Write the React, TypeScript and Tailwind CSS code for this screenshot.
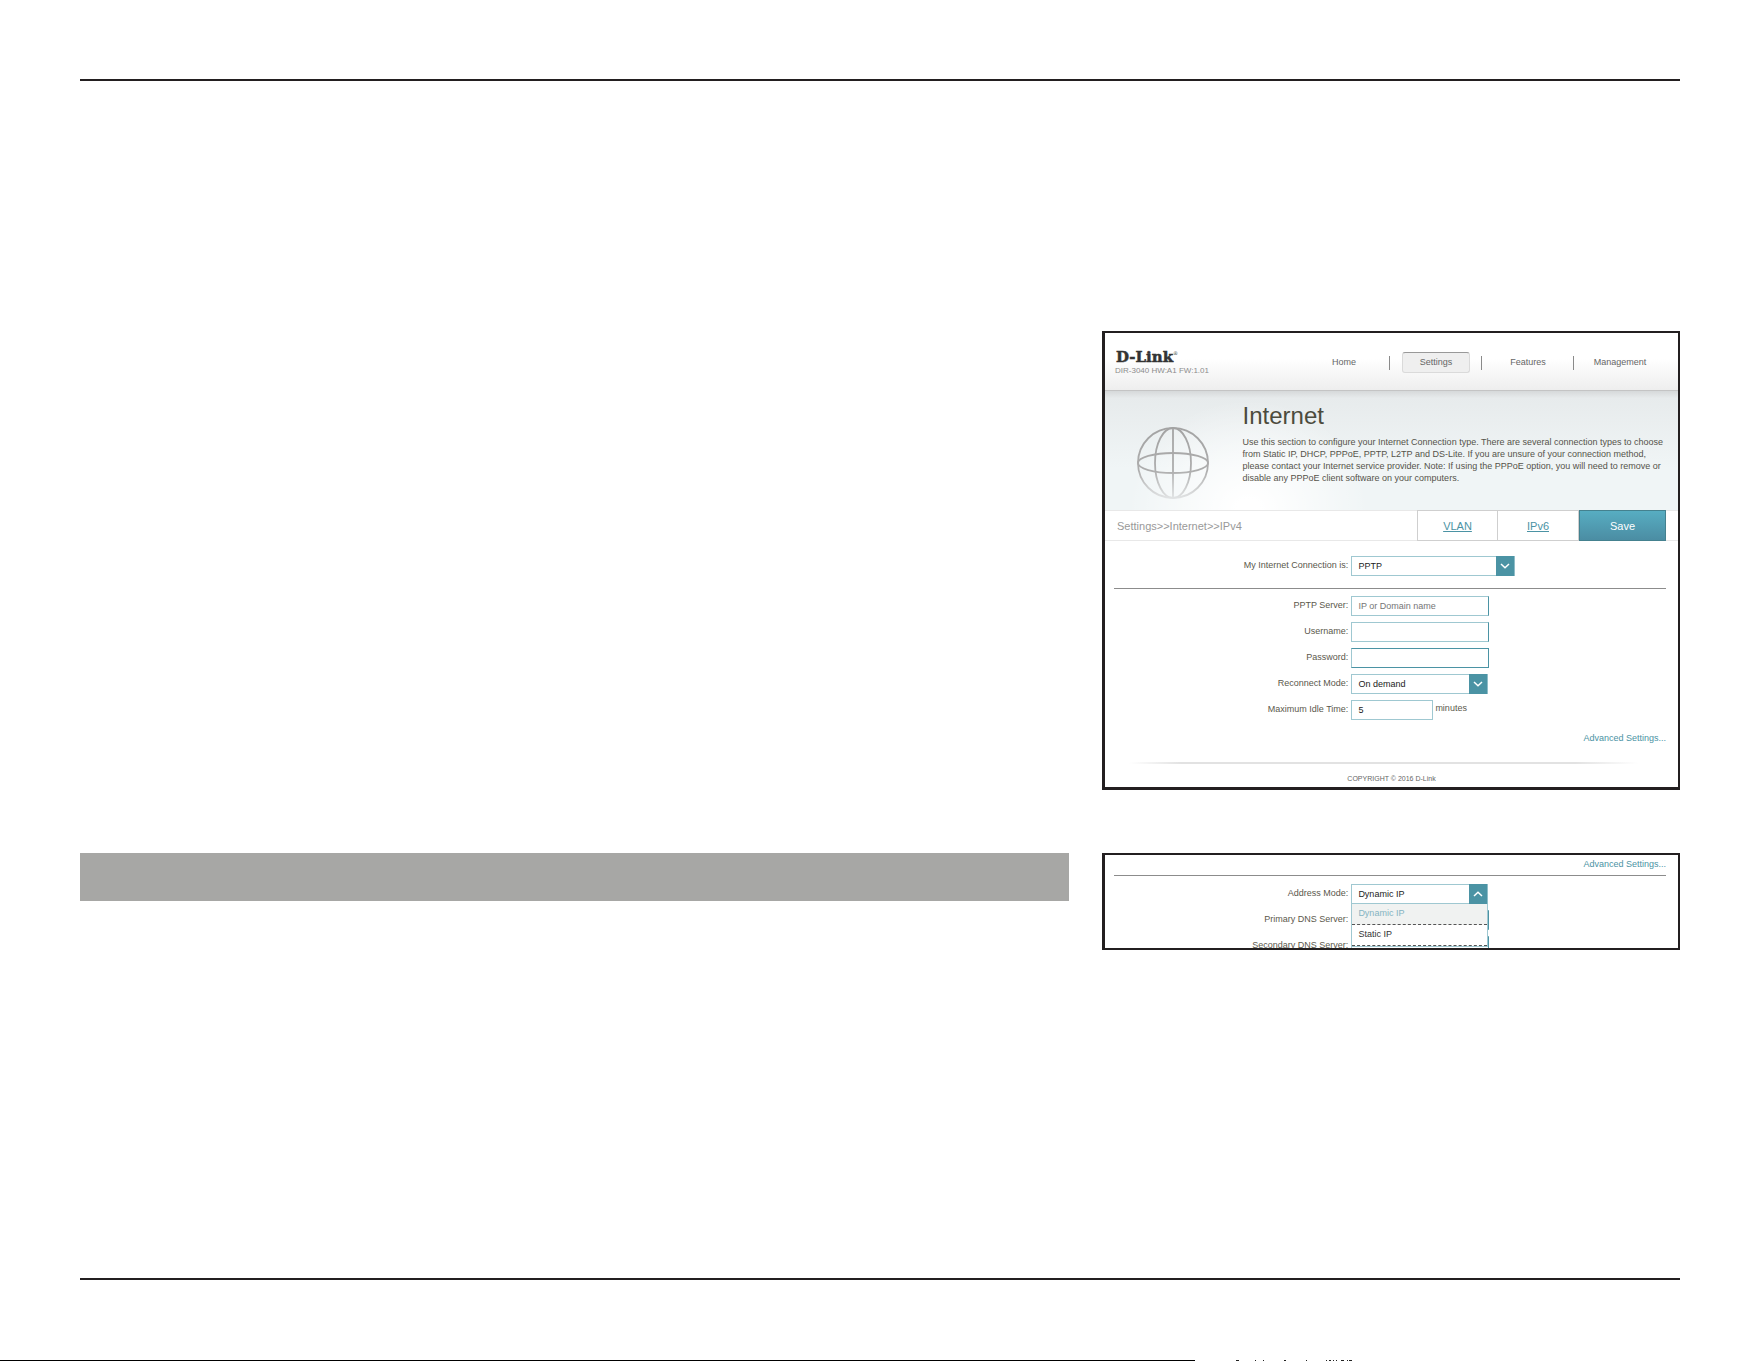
import React from "react";

const nav = ["Home", "Settings", "Features", "Management"];

function Globe() {
  return (
    <svg viewBox="0 0 72 72" className="h-[72px] w-[72px]" fill="none" aria-hidden="true">
      <defs>
        <linearGradient id="globe-stroke" gradientUnits="userSpaceOnUse" x1="0" y1="0" x2="0" y2="72">
          <stop offset="0" stopColor="#a3a3a3" />
          <stop offset="0.6" stopColor="#adadad" />
          <stop offset="1" stopColor="#e2e4e5" />
        </linearGradient>
      </defs>
      <g stroke="url(#globe-stroke)" strokeWidth="1.8">
        <circle cx="36" cy="36" r="35" />
        <ellipse cx="36" cy="36" rx="18" ry="35" />
        <ellipse cx="36" cy="36" rx="35" ry="10" />
        <path d="M36 1 L36.01 71" />
      </g>
    </svg>
  );
}

function Arrow({ up = false }: { up?: boolean }) {
  return (
    <span className="pointer-events-none absolute inset-y-0 right-0 flex w-[19px] items-center justify-center border-r border-[#8fbdc8] bg-[#4b93a4]">
      <svg viewBox="0 0 10 6" className="h-[6px] w-[10px]" fill="none" stroke="#fff" strokeWidth="1.5" aria-hidden="true">
        <path d={up ? "M1 5 L5 1.2 L9 5" : "M1 1 L5 4.8 L9 1"} />
      </svg>
    </span>
  );
}

function Select({ id, value, width, up }: { id: string; value: string; width: string; up?: boolean }) {
  return (
    <div className={`relative ${width}`}>
      <select
        id={id}
        defaultValue={value}
        className="block h-5 w-full appearance-none border border-[#9fc8d1] bg-white pl-[6px] text-[9px] leading-[18px] text-[#222] outline-none"
      >
        <option>{value}</option>
      </select>
      <Arrow up={up} />
    </div>
  );
}

function Row({ id, label, children }: { id: string; label: string; children: React.ReactNode }) {
  return (
    <div className="grid grid-cols-[43%_1fr]">
      <label htmlFor={id} className="pr-[3px] text-right text-[9px] leading-[19px] text-[#5b584c]">
        {label}
      </label>
      <div className="flex">{children}</div>
    </div>
  );
}

const inputBase =
  "block h-5 border bg-white pl-[6px] text-[9px] leading-[18px] text-[#222] outline-none placeholder:text-[#757575]";

function RouterPage() {
  return (
    <section className="border-2 border-b-[3px] border-l-[3px] border-[#231f20] bg-white">
      <header className="flex h-[57px] items-start justify-between bg-gradient-to-b from-white from-45% to-[#eeeeee] pr-3 pl-[10px]">
        <div className="pt-[15px]">
          <div className="flex pl-px font-['DejaVu_Serif'] text-[15px] leading-[18px] font-bold text-[#333] [-webkit-text-stroke:0.5px_#333]">
            D-Link
            <span className="text-[5px] leading-[10px] font-normal [-webkit-text-stroke:0px]">®</span>
          </div>
          <div className="text-[8px] leading-[10px] whitespace-nowrap text-[#8c8c8c]">DIR-3040 HW:A1 FW:1.01</div>
        </div>
        <nav className="flex pt-[19px]">
          {nav.map((item) => (
            <div key={item} className="flex w-[92px] items-center">
              <a
                href="#"
                className={
                  item === "Settings"
                    ? "ml-3 block h-[21px] w-[68px] rounded-[3px] border border-[#dadada] border-t-[#999] bg-[#efefef] text-center text-[9px] leading-[19px] text-[#666]"
                    : "ml-3 block h-[21px] w-[68px] text-center text-[9px] leading-[21px] text-[#666]"
                }
              >
                {item}
              </a>
              {item !== "Management" && <span className="ml-[11px] h-[14px] w-px bg-[#8a8a8a]" />}
            </div>
          ))}
        </nav>
      </header>

      <div className="grid h-[120px] grid-cols-[24%_1fr] border-t border-[#c4c4c4] bg-[radial-gradient(ellipse_120px_110px_at_25%_100%,#ffffff_10%,transparent),linear-gradient(to_bottom,#d6d9da,#e7ebec_6%,#f0f5f6_65%)]">
        <div className="flex justify-center pt-9 pr-px">
          <Globe />
        </div>
        <div className="pt-[10px] pr-3">
          <h1 className="text-[24px] leading-[30px] text-[#4c4b3d]">Internet</h1>
          <p className="mt-[5px] text-[9px] leading-[12px] text-[#55534a]">
            Use this section to configure your Internet Connection type. There are several connection types to choose
            from Static IP, DHCP, PPPoE, PPTP, L2TP and DS-Lite. If you are unsure of your connection method, please
            contact your Internet service provider. Note: If using the PPPoE option, you will need to remove or disable
            any PPPoE client software on your computers.
          </p>
        </div>
      </div>

      <div className="flex h-[31px] items-stretch border-y border-[#e8e8e8] pr-3 pl-3 text-[11px]">
        <div className="flex-1 leading-[30px] text-[#999]">Settings&gt;&gt;Internet&gt;&gt;IPv4</div>
        <a href="#" className="-my-px w-[81px] border border-[#cfcfcf] text-center leading-[31px] text-[#4b93a4] underline">
          VLAN
        </a>
        <a href="#" className="-my-px w-[81px] border border-l-0 border-[#cfcfcf] text-center leading-[31px] text-[#4b93a4] underline">
          IPv6
        </a>
        <button
          type="button"
          className="-my-px w-[87px] border border-[#44818f] bg-gradient-to-b from-[#57adc2] to-[#4b8da3] text-center leading-[31px] text-white"
        >
          Save
        </button>
      </div>

      <form className="pt-[15px]">
        <Row id="connection" label="My Internet Connection is:">
          <Select id="connection" value="PPTP" width="w-[164px]" />
        </Row>
        <hr className="mt-3 mr-3 ml-[9px] border-t border-[#8c8c8c]" />
        <div className="mt-[7px] flex flex-col gap-[6px]">
          <Row id="server" label="PPTP Server:">
            <input id="server" placeholder="IP or Domain name" className={`${inputBase} w-[138px] border-[#9fc8d1] border-r-[#4b93a4]`} />
          </Row>
          <Row id="username" label="Username:">
            <input id="username" className={`${inputBase} w-[138px] border-[#9fc8d1] border-r-[#4b93a4]`} />
          </Row>
          <Row id="password" label="Password:">
            <input id="password" type="password" className={`${inputBase} w-[138px] border-[#4b93a4] border-l-[#9fc8d1]`} />
          </Row>
          <Row id="reconnect" label="Reconnect Mode:">
            <Select id="reconnect" value="On demand" width="w-[137px]" />
          </Row>
          <Row id="idle" label="Maximum Idle Time:">
            <input id="idle" defaultValue="5" className={`${inputBase} w-[82px] border-[#9fc8d1]`} />
            <span className="pl-[2px] text-[9px] leading-[17px] text-[#5b584c]">minutes</span>
          </Row>
        </div>
        <div className="mt-[11px] pr-3 text-right text-[9px] leading-[14px]">
          <a href="#" className="text-[#4b93a4]">Advanced Settings...</a>
        </div>
      </form>

      <footer className="pt-[17px] pb-[2px]">
        <div className="mx-6 h-[2px] bg-[linear-gradient(to_right,transparent,#e2e2e2_10%,#e2e2e2_85%,transparent_97%)]" />
        <p className="mt-[9px] text-center text-[7px] leading-[12px] text-[#666]">COPYRIGHT © 2016 D-Link</p>
      </footer>
    </section>
  );
}

function AdvancedPanel() {
  return (
    <section className="h-[97px] overflow-hidden border-2 border-l-[3px] border-[#231f20] bg-white">
      <div className="pt-[2px] pr-3 text-right text-[9px] leading-[14px]">
        <a href="#" className="text-[#4b93a4]">Advanced Settings...</a>
      </div>
      <hr className="mt-1 mr-3 ml-[9px] border-t border-[#8c8c8c]" />
      <div className="mt-2 flex flex-col gap-[6px]">
        <Row id="address" label="Address Mode:">
          <div className="relative">
            <Select id="address" value="Dynamic IP" width="w-[137px]" up />
            <ul className="absolute top-5 left-0 z-10 w-[137px] border border-t-0 border-[#9fc8d1] bg-white text-[9px] leading-[19px]">
              <li className="h-[21px] border-b border-dashed border-[#555] bg-[#f0f2f1] pl-[6px] text-[#85b4c2]">Dynamic IP</li>
              <li className="h-[21px] border-b border-dashed border-[#555] pl-[6px] text-[#333]">Static IP</li>
            </ul>
          </div>
        </Row>
        <Row id="dns1" label="Primary DNS Server:">
          <input id="dns1" className={`${inputBase} w-[138px] border-[#9fc8d1] border-r-[#4b93a4]`} />
        </Row>
        <Row id="dns2" label="Secondary DNS Server:">
          <input id="dns2" className={`${inputBase} w-[138px] border-[#9fc8d1] border-r-[#4b93a4]`} />
        </Row>
      </div>
    </section>
  );
}

export default function App() {
  return (
    <div className="flex min-h-screen flex-col bg-white font-['Liberation_Sans',Arial,sans-serif]">
      <div className="flex flex-1 flex-col pt-[79px] pr-[81px] pl-20">
        <hr className="border-t-2 border-[#231f20]" />
        <main className="mt-[250px] flex-1">
          <div className="grid grid-cols-[989fr_578fr] gap-x-[33px] gap-y-[63px]">
            <div />
            <RouterPage />
            <div className="h-12 bg-[#a7a7a5]" />
            <AdvancedPanel />
          </div>
        </main>
        <hr className="mb-20 border-t-2 border-[#231f20]" />
      </div>
      <div className="grid h-px grid-cols-[1195fr_566fr]">
        <div className="bg-black" />
        <svg className="h-px w-[160px]" viewBox="0 0 160 1" aria-hidden="true">
          <path d="M41 0h3v1h-3zM60 0h1v1h-1zM68 0h1v1h-1zM89 0h2v1h-2zM111 0h1v1h-1zM131 0h1v1h-1zM134 0h2v1h-2zM138 0h1v1h-1zM141 0h1v1h-1zM146 0h3v1h-3zM152 0h1v1h-1zM154 0h3v1h-3z" fill="#222" />
        </svg>
      </div>
    </div>
  );
}
